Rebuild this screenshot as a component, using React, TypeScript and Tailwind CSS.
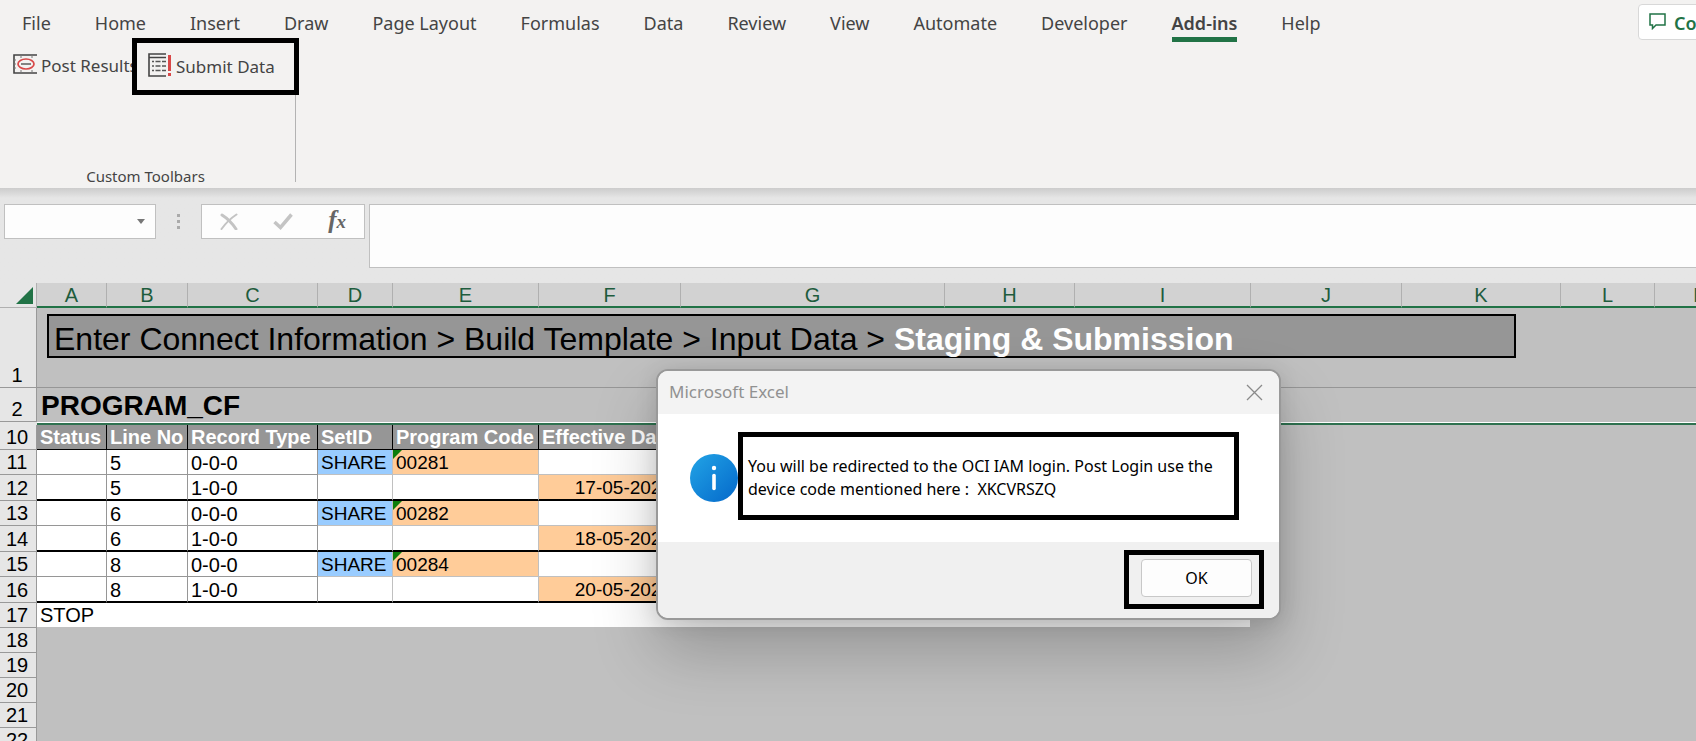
import type { ReactNode } from "react"

const TABS = [
  "File",
  "Home",
  "Insert",
  "Draw",
  "Page Layout",
  "Formulas",
  "Data",
  "Review",
  "View",
  "Automate",
  "Developer",
  "Add-ins",
  "Help",
]

const COLUMNS = [
  { name: "A", width: 70 },
  { name: "B", width: 81 },
  { name: "C", width: 130 },
  { name: "D", width: 75 },
  { name: "E", width: 146 },
  { name: "F", width: 142 },
  { name: "G", width: 264 },
  { name: "H", width: 130 },
  { name: "I", width: 176 },
  { name: "J", width: 151 },
  { name: "K", width: 159 },
  { name: "L", width: 94 },
  { name: "M", width: 94 },
]

const FIELDS = ["Status", "Line No", "Record Type", "SetID", "Program Code", "Effective Date"]

const RECORDS = [
  { row: 11, line: 5, type: "0-0-0", setId: "SHARE", code: "00281", date: "" },
  { row: 12, line: 5, type: "1-0-0", setId: "", code: "", date: "17-05-2023" },
  { row: 13, line: 6, type: "0-0-0", setId: "SHARE", code: "00282", date: "" },
  { row: 14, line: 6, type: "1-0-0", setId: "", code: "", date: "18-05-2023" },
  { row: 15, line: 8, type: "0-0-0", setId: "SHARE", code: "00284", date: "" },
  { row: 16, line: 8, type: "1-0-0", setId: "", code: "", date: "20-05-2023" },
]

const EMPTY_ROWS = [18, 19, 20, 21, 22]

function PostIcon() {
  return (
    <svg width="24" height="20" viewBox="0 0 24 20" fill="none" className="shrink-0">
      <path d="M24 1H1v18h23" stroke="#444" strokeWidth="1.6" />
      <path d="M8 1v3M19 1v3M8 19v-3M19 19v-3M1 6h2M1 10h2M1 14h2" stroke="#777" />
      <ellipse cx="13" cy="10" rx="8" ry="5" stroke="#d94848" strokeWidth="1.7" />
      <path d="M8 10h10" stroke="#444" strokeWidth="1.3" />
    </svg>
  )
}

function SubmitIcon() {
  return (
    <svg width="24" height="24" viewBox="0 0 24 24" fill="none" className="shrink-0">
      <path d="M18 1H1v22h17M1 4.500h17" stroke="#444" strokeWidth="1.6" />
      <path
        d="M4 8.500h2M7.500 8.500h5M14 8.500h4M4 13h2M7.500 13h5M14 13h4M4 17.500h2M7.500 17.500h5M14 17.500h4"
        stroke="#555"
        strokeWidth="1.3"
      />
      <path d="M21.500 2v16M21.500 20v3" stroke="#d94848" strokeWidth="3" />
    </svg>
  )
}

function InfoIcon() {
  return (
    <svg width="48" height="48" viewBox="0 0 48 48" className="shrink-0">
      <defs>
        <linearGradient id="info" x1="0" y1="0" x2="1" y2="1">
          <stop offset="0" stopColor="#22a4e6" />
          <stop offset="1" stopColor="#0468ca" />
        </linearGradient>
      </defs>
      <circle cx="24" cy="24" r="24" fill="url(#info)" />
      <circle cx="24" cy="14" r="2.200" fill="#fff" />
      <path d="M24 21.500v13" stroke="#fff" strokeWidth="3.600" strokeLinecap="round" />
    </svg>
  )
}

function Ribbon() {
  return (
    <header className="shrink-0 bg-[#f3f2f1] pb-1.5 text-[#444]">
      <div className="flex h-[42px] items-start justify-between overflow-hidden">
        <nav className="flex shrink-0 gap-11 pl-[22px] text-[18px] leading-[26px]">
          {TABS.map((tab) => (
            <button
              key={tab}
              className={
                tab === "Add-ins"
                  ? "h-[42px] border-b-5 border-[#217346] pt-2.5 pb-px font-semibold whitespace-nowrap"
                  : "h-[42px] pt-2.5 pb-1.5 whitespace-nowrap"
              }
            >
              {tab}
            </button>
          ))}
        </nav>
        <div className="mt-1 w-[58px] shrink-0 overflow-hidden">
          <button className="flex h-9 w-[150px] items-center gap-2 rounded-sm border border-[#d8d8d8] bg-white pt-0.5 pl-2.5 text-[18px] font-semibold text-[#217346]">
            <svg width="17" height="17" viewBox="0 0 17 17" fill="none" className="mb-1">
              <path d="M1 1h15v11H7l-3.500 3.500V12H1z" stroke="#217346" strokeWidth="1.5" />
            </svg>
            Comments
          </button>
        </div>
      </div>
      <section
        aria-label="Custom Toolbars"
        className="flex h-[140px] w-[296px] flex-col justify-between border-r border-[#b3b3b3]"
      >
        <div className="-mt-1 flex pl-3 text-[17px]">
          <button className="flex w-[120px] shrink-0 items-center gap-1 pt-1 pb-2.5 pl-px whitespace-nowrap">
            <PostIcon />
            <span className="pt-1">Post Results</span>
          </button>
          <div className="relative flex h-[57px] w-[167px] shrink-0 border-5 border-black bg-[#f3f2f1] pl-[11px]">
            <button className="flex items-center gap-1 pb-1 whitespace-nowrap">
              <SubmitIcon />
              <span className="pt-1">Submit Data</span>
            </button>
          </div>
        </div>
        <p className="pr-1 text-center text-[15px] leading-[12px]">Custom Toolbars</p>
      </section>
    </header>
  )
}

function FormulaBar() {
  return (
    <div className="flex h-[95px] shrink-0 items-start bg-linear-to-b from-[#cccccc] to-[#e6e6e6] to-[10px] pt-4 pl-1">
      <div className="flex h-[35px] w-[152px] border border-[#c0c0c0] bg-[#fdfdfd]">
        <input aria-label="Name box" className="w-full min-w-0 px-2 outline-none" />
        <button aria-label="Named ranges" className="shrink-0 pr-2.5">
          <svg width="8" height="5" viewBox="0 0 8 5">
            <path d="M0 0h8L4 5z" fill="#777" />
          </svg>
        </button>
      </div>
      <div className="flex h-[35px] w-[45px] flex-col items-center justify-center gap-[3px]">
        <i className="size-[3px] bg-[#aaa]" />
        <i className="size-[3px] bg-[#aaa]" />
        <i className="size-[3px] bg-[#aaa]" />
      </div>
      <div className="flex h-[35px] w-[164px] items-center justify-between border border-[#c0c0c0] bg-[#fdfdfd] px-[18px]">
        <button aria-label="Cancel">
          <svg width="18" height="17" viewBox="0 0 18 17" fill="none" stroke="#c4c4c4" strokeLinecap="round">
            <path d="M2 2q8 5 14 14" strokeWidth="3" />
            <path d="M16.500 1.500Q8 7 1.500 16" strokeWidth="2" />
          </svg>
        </button>
        <button aria-label="Enter">
          <svg width="20" height="17" viewBox="0 0 20 17" fill="none">
            <path d="M1.500 9l6 5.500L18.500 1.500" stroke="#c4c4c4" strokeWidth="3.500" />
          </svg>
        </button>
        <button
          aria-label="Insert function"
          className="pb-0.5 font-['Liberation_Serif',serif] text-[25px] leading-6 font-bold text-[#666] italic"
        >
          f<span className="text-[19px]">x</span>
        </button>
      </div>
      <textarea
        aria-label="Formula"
        className="ml-1 h-16 min-w-0 flex-1 resize-none border border-r-0 border-[#c0c0c0] bg-[#fdfdfd] outline-none"
      />
    </div>
  )
}

function RowHeader({ children }: { children: ReactNode }) {
  return (
    <th
      scope="row"
      className="border-r border-b border-[#999] bg-[#e6e6e6] p-0 pr-0.5 text-center align-bottom leading-6 font-normal"
    >
      {children}
    </th>
  )
}

function Sheet() {
  return (
    <main className="min-h-0 flex-1 overflow-hidden bg-[#c0c0c0]">
      <table className="w-[1749px] table-fixed border-separate border-spacing-0 font-['Liberation_Sans',Arial,sans-serif] text-[20px] leading-6 text-black">
        <colgroup>
          <col className="w-[37px]" />
          {COLUMNS.map((c) => (
            <col key={c.name} style={{ width: c.width }} />
          ))}
        </colgroup>
        <thead>
          <tr className="h-[25px] leading-[21px]">
            <td className="border-r border-b border-[#b0b0b0] bg-[#e6e6e6] p-0">
              <button aria-label="Select all" className="ml-4 block">
                <svg width="17" height="17" viewBox="0 0 17 17">
                  <path d="M17 0v17H0z" fill="#217346" />
                </svg>
              </button>
            </td>
            {COLUMNS.map((c) => (
              <th
                key={c.name}
                scope="col"
                className="border-r border-b-2 border-r-[#b0b0b0] border-b-[#217346] bg-[#d2d2d2] p-0 pt-0.5 font-normal text-[#1e5c3d]"
              >
                {c.name}
              </th>
            ))}
          </tr>
        </thead>
        <tbody>
          <tr className="h-20">
            <RowHeader>1</RowHeader>
            <td colSpan={13} className="border-b border-[#969696] p-0 align-top">
              <div className="mt-1.5 ml-2.5 h-11 w-[1469px] border-2 border-black bg-[#969696] pl-[5px] text-[32px] leading-[46px] whitespace-nowrap">
                Enter Connect Information &gt; Build Template &gt; Input Data &gt;{" "}
                <b className="text-white">Staging &amp; Submission</b>
              </div>
            </td>
          </tr>
          <tr className="h-[34px]">
            <RowHeader>2</RowHeader>
            <td colSpan={13} className="p-0 pt-0.5 pl-1 text-[28px] leading-8 font-bold">
              PROGRAM_CF
            </td>
          </tr>
          {/* frozen pane split */}
          <tr className="h-[3px]">
            <td className="bg-[#e6e6e6] p-0" />
            <td colSpan={13} className="border-t border-white bg-[#2f7250] p-0" />
          </tr>
          <tr className="h-[25px]">
            <RowHeader>10</RowHeader>
            {FIELDS.map((f) => (
              <th
                key={f}
                className="overflow-hidden border-r border-b border-black bg-[#969696] p-0 pl-[3px] text-left font-bold whitespace-nowrap text-white"
              >
                {f}
              </th>
            ))}
            <td colSpan={3} className="border-b border-black bg-[#969696] p-0" />
            <td colSpan={4} className="p-0" />
          </tr>
          {RECORDS.map((r) => {
            const last = r.setId === ""
            const line = last ? "border-b-2 border-b-black" : "border-b border-b-[#969696]"
            const soft = last ? "border-b-2 border-b-black" : "border-b border-b-[#c0c0c0]"
            return (
              <tr key={r.row} className={last ? "h-[26px] leading-[22px]" : "h-[25px] leading-[22px]"}>
                <RowHeader>{r.row}</RowHeader>
                <td className={`border-r border-r-[#969696] bg-white p-0 ${line}`} />
                <td className={`border-r border-r-[#969696] bg-white p-0 pt-0.5 pl-[3px] ${line}`}>{r.line}</td>
                <td className={`border-r border-r-[#969696] bg-white p-0 pt-0.5 pl-[3px] ${line}`}>{r.type}</td>
                <td
                  className={`border-r border-r-[#c0c0c0] p-0 pt-0.5 pl-[3px] text-[19px] ${soft} ${last ? "bg-white" : "bg-[#99ccff]"}`}
                >
                  {r.setId}
                </td>
                <td
                  className={`relative border-r border-r-[#c0c0c0] p-0 pt-0.5 pl-[3px] text-[19px] ${soft} ${last ? "bg-white" : "bg-[#ffcc99]"}`}
                >
                  {!last && (
                    <svg width="9" height="9" viewBox="0 0 9 9" className="absolute top-0 left-0">
                      <path d="M0 0h9L0 9z" fill="#0b7d0b" />
                    </svg>
                  )}
                  <span className="relative">{r.code}</span>
                </td>
                <td
                  className={`border-r border-r-[#c0c0c0] p-0 pt-0.5 pr-2 text-right text-[19px] ${soft} ${last ? "bg-[#ffcc99]" : "bg-white"}`}
                >
                  {r.date}
                </td>
                <td colSpan={3} className={`bg-white p-0 ${soft}`} />
                <td colSpan={4} className="p-0" />
              </tr>
            )
          })}
          <tr className="h-[25px]">
            <RowHeader>17</RowHeader>
            <td colSpan={9} className="border-r border-b border-[#c0c0c0] bg-white p-0 pl-[3px]">
              STOP
            </td>
            <td colSpan={4} className="p-0" />
          </tr>
          {EMPTY_ROWS.map((n) => (
            <tr key={n} className="h-[25px]">
              <RowHeader>{n}</RowHeader>
              <td colSpan={13} className="p-0" />
            </tr>
          ))}
        </tbody>
      </table>
    </main>
  )
}

function MessageBox() {
  return (
    <div
      role="dialog"
      aria-labelledby="dialog-title"
      className="absolute top-[369px] left-[656px] w-[625px] overflow-hidden rounded-xl border-2 border-[#999] bg-white shadow-[0_32px_64px_rgba(0,0,0,0.22),0_2px_21px_rgba(0,0,0,0.12)]"
    >
      <div className="flex h-[43px] items-center justify-between bg-[#f3f3f3] pr-4 pl-[11px]">
        <h2 id="dialog-title" className="pb-0.5 text-[17px] text-[#919191]">
          Microsoft Excel
        </h2>
        <button aria-label="Close">
          <svg width="17" height="17" viewBox="0 0 17 17">
            <path d="M1 1l15 15M16 1L1 16" stroke="#8a8a8a" strokeWidth="1.3" />
          </svg>
        </button>
      </div>
      <div className="flex h-32 items-start pt-[18px] pl-8">
        <div className="pt-[22px]">
          <InfoIcon />
        </div>
        <p className="h-[88px] w-[501px] border-5 border-black pt-[18px] pl-[5px] text-[16px] leading-[23px] whitespace-nowrap text-black">
          You will be redirected to the OCI IAM login. Post Login use the
          <br />
          device code mentioned here :&nbsp; XKCVRSZQ
        </p>
      </div>
      <div className="flex h-[76px] items-start justify-end bg-[#f0f0f0] pt-2 pr-[15px]">
        <div className="h-[59px] w-[140px] border-5 border-black pt-1 pl-3">
          <button className="h-[38px] w-[111px] rounded-sm border border-[#c8c8c8] bg-[#fdfdfd] text-[16px] text-black">
            OK
          </button>
        </div>
      </div>
    </div>
  )
}

export default function App() {
  return (
    <div className="relative flex h-screen flex-col overflow-hidden bg-[#e6e6e6] font-['Noto_Sans','Open_Sans',sans-serif]">
      <Ribbon />
      <FormulaBar />
      <Sheet />
      <MessageBox />
    </div>
  )
}
